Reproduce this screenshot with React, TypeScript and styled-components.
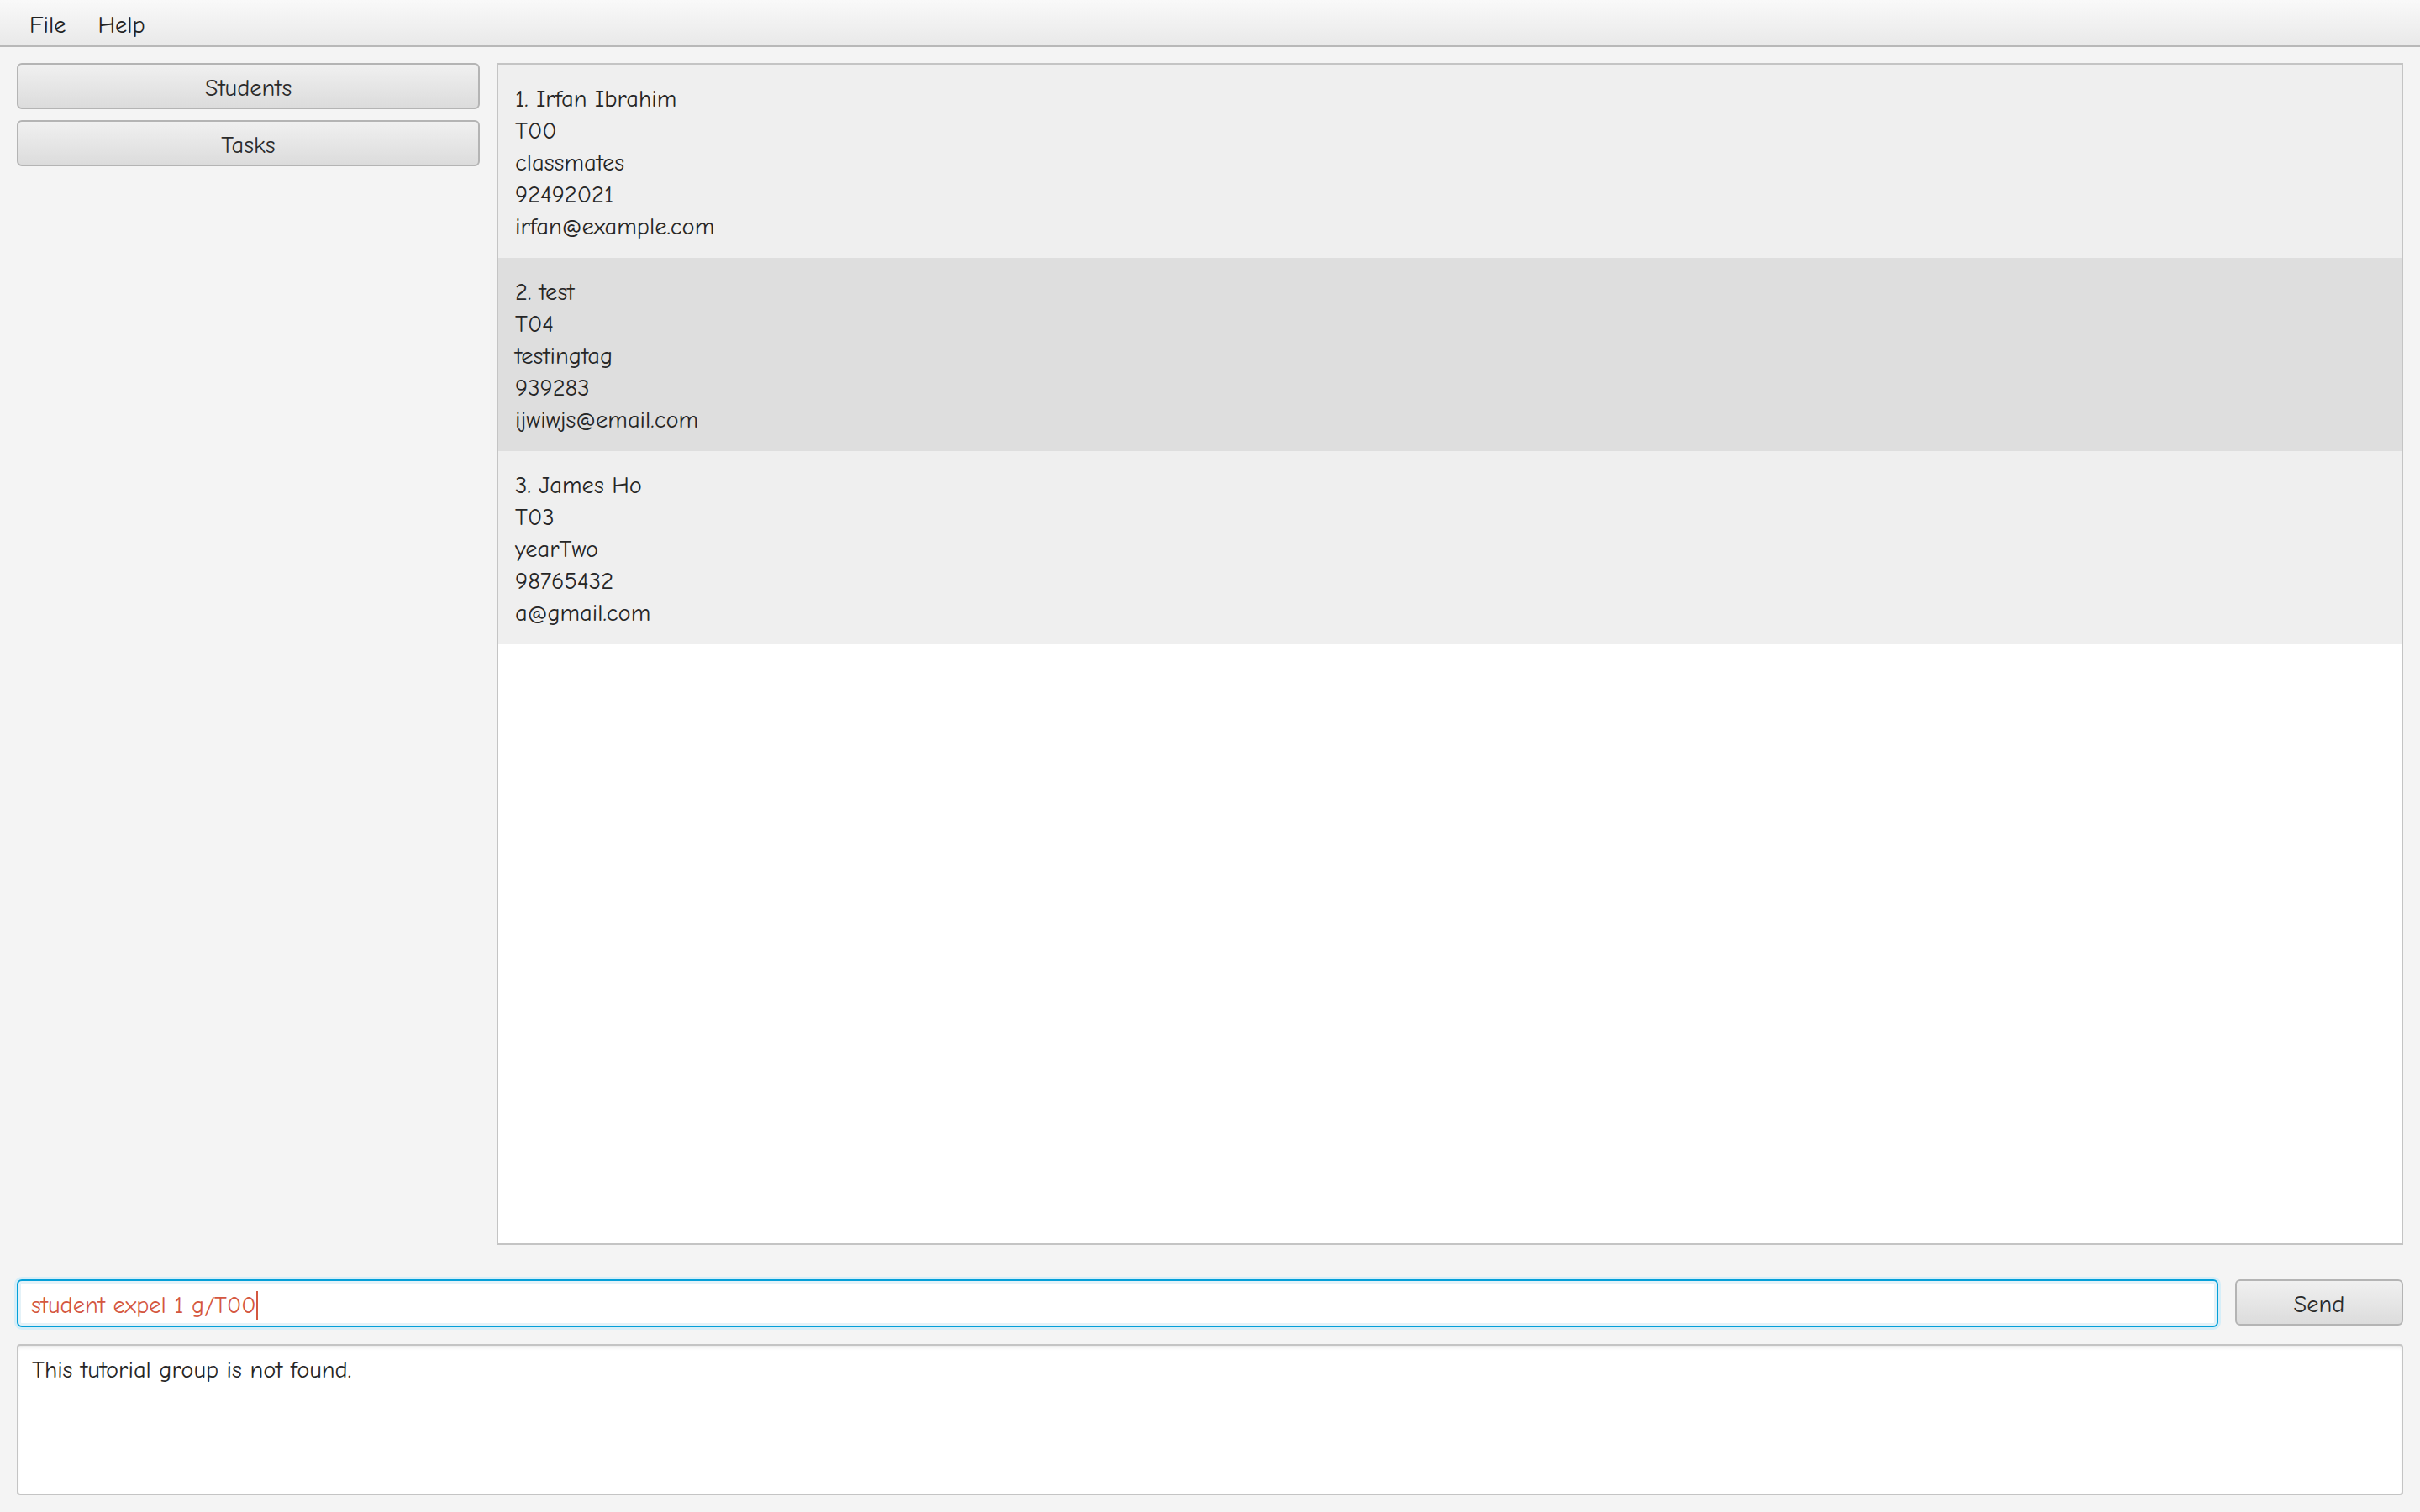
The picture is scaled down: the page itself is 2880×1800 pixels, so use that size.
import React from "react";
import styled, { createGlobalStyle } from "styled-components";

const students = [
  { name: "Irfan Ibrahim", group: "T00", tag: "classmates", phone: "92492021", email: "irfan@example.com" },
  { name: "test", group: "T04", tag: "testingtag", phone: "939283", email: "ijwiwjs@email.com" },
  { name: "James Ho", group: "T03", tag: "yearTwo", phone: "98765432", email: "a@gmail.com" },
];

const App = () => {
  return (
    <>
      <GlobalStyle />
      <Window>
        <MenuBar>
          <MenuItem>File</MenuItem>
          <MenuItem>Help</MenuItem>
        </MenuBar>
        <Main>
          <Sidebar>
            <PanelButton>Students</PanelButton>
            <PanelButton>Tasks</PanelButton>
          </Sidebar>
          <ListPanel>
            {students.map((s, i) => (
              <ListRow key={s.name} $selected={i === 1}>
                <div>
                  {i + 1}. {s.name}
                </div>
                <div>{s.group}</div>
                <div>{s.tag}</div>
                <div>{s.phone}</div>
                <div>{s.email}</div>
              </ListRow>
            ))}
          </ListPanel>
        </Main>
        <CommandRow>
          <CommandBox>
            <CommandText>student expel 1 g/T00</CommandText>
            <Caret />
          </CommandBox>
          <SendButton>Send</SendButton>
        </CommandRow>
        <ResultBox>This tutorial group is not found.</ResultBox>
      </Window>
    </>
  );
};

const GlobalStyle = createGlobalStyle`
  html, body {
    margin: 0;
    padding: 0;
    background: #f4f4f4;
  }
  body {
    font-family: "Comic Sans MS", "Comic Neue", "Liberation Sans", sans-serif;
    font-size: 28.5px;
    color: #262626;
  }
`;

const Window = styled.div`
  display: flex;
  flex-direction: column;
  height: 100vh;
  box-sizing: border-box;
`;

const MenuBar = styled.div`
  display: flex;
  align-items: center;
  height: 50px;
  padding: 4px 0 0 16px;
  background: linear-gradient(#f9f9f9, #e9e9e9);
  border-bottom: 2px solid #b8b8b8;
`;

const MenuItem = styled.div`
  padding: 0 19px;
  color: #222;
`;

const Main = styled.div`
  flex: 1;
  display: flex;
  gap: 20px;
  padding: 19px 20px 0 20px;
  min-height: 0;
`;

const Sidebar = styled.div`
  width: 551px;
  display: flex;
  flex-direction: column;
  gap: 13px;
`;

const PanelButton = styled.div`
  height: 55px;
  box-sizing: border-box;
  display: flex;
  align-items: center;
  justify-content: center;
  padding-top: 4px;
  border: 2px solid #b4b4b4;
  border-radius: 6px;
  background: linear-gradient(#f0f0f0, #dcdcdc);
  color: #2b2b2b;
`;

const ListPanel = styled.div`
  flex: 1;
  box-sizing: border-box;
  border: 2px solid #c4c4c4;
  background: #ffffff;
  overflow: hidden;
`;

const ListRow = styled.div<{ $selected: boolean }>`
  height: 230px;
  box-sizing: border-box;
  padding: 22px 20px 0 20px;
  line-height: 38px;
  background: ${(p) => (p.$selected ? "#dedede" : "#efefef")};
`;

const CommandRow = styled.div`
  display: flex;
  gap: 20px;
  padding: 41px 20px 0 20px;
`;

const CommandBox = styled.div`
  flex: 1;
  height: 57px;
  box-sizing: border-box;
  display: flex;
  align-items: center;
  padding: 4px 0 0 15px;
  border: 2px solid #049fd8;
  border-radius: 6px;
  background: #ffffff;
  box-shadow: 0 0 0 3px #d6eef8, inset 0 0 0 3px #e4f2f8;
`;

const CommandText = styled.span`
  color: #d4573f;
`;

const Caret = styled.span`
  width: 2px;
  height: 34px;
  background: #d4573f;
`;

const SendButton = styled(PanelButton)`
  width: 200px;
`;

const ResultBox = styled.div`
  height: 180px;
  box-sizing: border-box;
  margin: 20px 20px 20px 20px;
  padding: 10px 16px;
  border: 2px solid #c4c4c4;
  border-radius: 4px;
  background: #ffffff;
  box-shadow: inset 0 4px 4px -2px #e8e8e8;
  line-height: 38px;
`;

export default App;
